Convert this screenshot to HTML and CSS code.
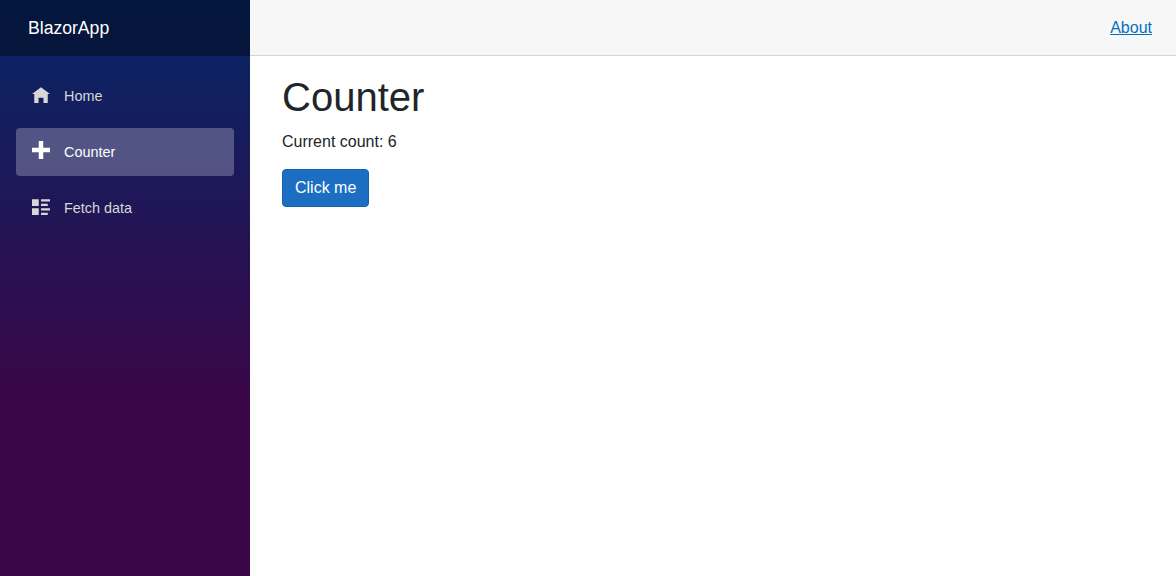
FILE: index.html
```html
<!DOCTYPE html>
<html>
<head>
    <title>BlazorApp</title>
    <link rel="stylesheet" href="styles.css">
</head>
<body>
    <div class="page">
        <div class="sidebar">
            <div class="top-row">
                <a class="navbar-brand" href="#">BlazorApp</a>
            </div>
            <ul class="nav">
                <li class="nav-item">
                    <a class="nav-link" href="#">
                        <svg class="icon" viewBox="0 -1 8 8"><path d="M4 0l-4 3h1v4h1.9v-2.3h2.2v2.3h1.9v-4.03l1 .03-4-3z"/></svg>
                        Home
                    </a>
                </li>
                <li class="nav-item">
                    <a class="nav-link active" href="#">
                        <svg class="icon" viewBox="0 0 8 8"><path d="M3 0v3h-3v2h3v3h2v-3h3v-2h-3v-3h-2z"/></svg>
                        Counter
                    </a>
                </li>
                <li class="nav-item">
                    <a class="nav-link" href="#">
                        <svg class="icon" viewBox="0 -1 8 8"><path d="M0 0v3h3v-3h-3zm4 0v1h4v-1h-4zm0 2v1h3v-1h-3zm-4 2v3h3v-3h-3zm4 0v1h4v-1h-4zm0 2v1h3v-1h-3z"/></svg>
                        Fetch data
                    </a>
                </li>
            </ul>
        </div>
        <div class="main">
            <div class="top-bar">
                <a class="about" href="#">About</a>
            </div>
            <div class="content">
                <h1>Counter</h1>
                <p>Current count: 6</p>
                <button class="btn">Click me</button>
            </div>
        </div>
    </div>
</body>
</html>
```

FILE: styles.css
```css
html, body {
    margin: 0;
    height: 100%;
    font-family: "Liberation Sans", Arial, sans-serif;
    font-size: 16px;
    line-height: 1.5;
    color: #212529;
    overflow: hidden;
}
.page {
    display: flex;
    height: 100%;
}
.sidebar {
    width: 250px;
    flex-shrink: 0;
    background-image: linear-gradient(180deg, rgb(5, 39, 103) 0%, #3a0647 70%);
}
.sidebar .top-row {
    display: flex;
    align-items: center;
    height: 56px;
    padding-left: 28px;
    background-color: rgba(0, 0, 0, 0.4);
}
.navbar-brand {
    font-size: 17.6px;
    color: white;
    text-decoration: none;
}
.nav {
    list-style: none;
    margin: 0;
    padding: 16px 16px 0;
}
.nav-item {
    font-size: 14.4px;
    padding-bottom: 8px;
}
.nav-link {
    display: flex;
    align-items: center;
    height: 48px;
    line-height: 50px;
    padding-left: 16px;
    border-radius: 4px;
    color: #d7d7d7;
    text-decoration: none;
}
.nav-link.active {
    background-color: rgba(255, 255, 255, 0.25);
    color: white;
}
.icon {
    width: 18px;
    height: 18px;
    margin-right: 14px;
    margin-top: -4px;
    fill: currentColor;
}
.main {
    flex: 1;
}
.top-bar {
    display: flex;
    justify-content: flex-end;
    align-items: center;
    box-sizing: border-box;
    height: 56px;
    padding-right: 24px;
    background-color: #f7f7f7;
    border-bottom: 1px solid #d6d5d5;
}
.about {
    color: #0071c1;
}
.content {
    padding: 17px 32px 0;
}
h1 {
    margin: 0 0 8.6px;
    font-size: 40px;
    font-weight: 500;
    line-height: 1.2;
}
p {
    margin: 0 0 15px;
}
.btn {
    padding: 6px 12px;
    font-family: inherit;
    font-size: 16px;
    line-height: 1.5;
    color: white;
    background-color: #1b6ec2;
    border: 1px solid #1861ac;
    border-radius: 4px;
    cursor: pointer;
}
```
